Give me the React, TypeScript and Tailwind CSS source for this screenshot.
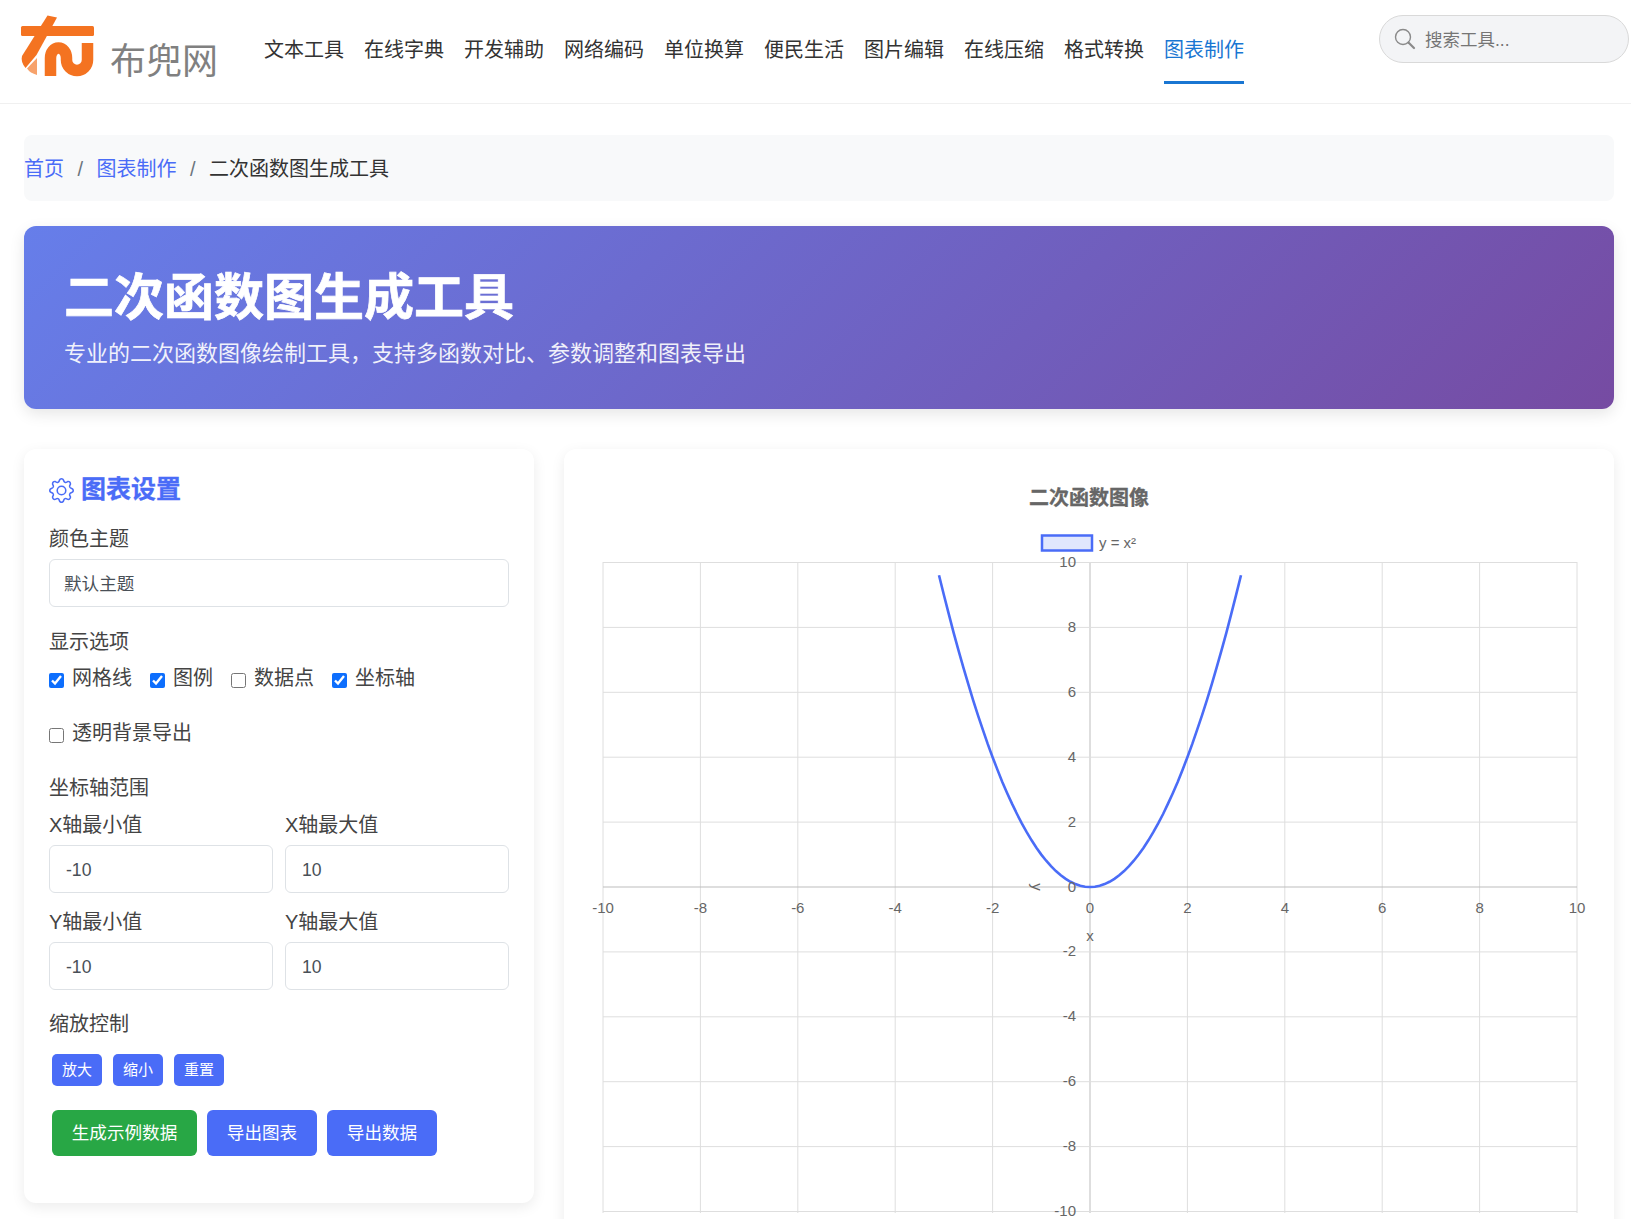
import { BsGear } from "react-icons/bs";

const navItems = ["文本工具", "在线字典", "开发辅助", "网络编码", "单位换算", "便民生活", "图片编辑", "在线压缩", "格式转换", "图表制作"];
const xTicks = [-10, -8, -6, -4, -2, 0, 2, 4, 6, 8, 10];

const X0 = 1090;
const Y0 = 887;
const XU = 48.7;
const YU = 32.45;

function curve() {
  const pts: string[] = [];
  for (let x = -3.1; x <= 3.101; x += 0.1) {
    pts.push(`${(X0 + x * XU).toFixed(1)},${(Y0 - x * x * YU).toFixed(1)}`);
  }
  return pts.join(" ");
}

function Label({ children, className }: { children: React.ReactNode; className: string }) {
  return <div className={`h-[30px] pt-px text-[20px] leading-[30px] text-[#444] ${className}`}>{children}</div>;
}

function Check({ label, checked }: { label: string; checked?: boolean }) {
  return (
    <label className="flex items-center gap-2 text-[20px] leading-[30px] text-[#444]">
      <input type="checkbox" defaultChecked={checked} className="m-0 mt-[5px] size-[15px] accent-[#0d6efd]" />
      <span>{label}</span>
    </label>
  );
}

function NumField({ label, value }: { label: string; value: string }) {
  return (
    <div className="flex-1">
      <div className="h-[30px] pt-px text-[20px] leading-[30px] text-[#444]">{label}</div>
      <input
        readOnly
        value={value}
        className="mt-[6px] block h-[48px] w-full rounded-[6px] border border-[#dee2e6] bg-white pl-4 pt-[2px] text-[17.6px] text-[#495057] outline-none"
      />
    </div>
  );
}

function Logo() {
  return (
    <div className="flex items-end">
      <svg width="74" height="62" viewBox="20 15 74 62" className="block">
        <rect x="21" y="26" width="73" height="10" rx="1.5" fill="#f47321" />
        <path d="M47.5 15.5 L57 17.5 L36.5 55 L25.5 68 Q20.5 62 22 56 Z" fill="#f47321" />
        <path d="M37 58 V75 Q30 73 27 68.5 Z" fill="#f7a26b" />
        <path
          d="M50.5 76 V58 A8 10 0 0 1 66.5 58 V60 A10.5 10.5 0 0 0 87.5 60 V43"
          fill="none"
          stroke="#f47321"
          strokeWidth="11.5"
        />
      </svg>
      <span className="mb-[-6px] ml-4 text-[36px] leading-[42px] text-[#808080]">布兜网</span>
    </div>
  );
}

export default function App() {
  return (
    <div className="h-screen overflow-hidden bg-white font-['Liberation_Sans','Noto_Sans_CJK_SC',sans-serif]">
      <header className="flex h-[104px] items-start border-b border-[#f0f0f0] pl-5">
        <div className="mt-[15px]">
          <Logo />
        </div>
        <nav className="ml-[46px] flex gap-5">
          {navItems.map((item, i) => (
            <a
              key={item}
              className={`h-[84px] border-b-[3px] pt-[35px] text-[20px] leading-[30px] ${
                i === navItems.length - 1 ? "border-[#1976d2] text-[#1976d2]" : "border-transparent text-[#333]"
              }`}
            >
              {item}
            </a>
          ))}
        </nav>
        <div className="ml-auto mr-[2px] mt-[15px] flex h-[48px] w-[250px] items-center rounded-full border border-[#d9d9d9] bg-[#f3f4f6] pl-[14px]">
          <svg width="22" height="22" viewBox="0 0 22 22" fill="none" stroke="#8a8a8a" className="shrink-0">
            <circle cx="9" cy="9" r="7.5" strokeWidth="1.4" />
            <path d="M14.5 14.5 L20 20" strokeWidth="2.2" strokeLinecap="round" />
          </svg>
          <span className="ml-[9px] pt-[2px] text-[17.5px] text-[#757575]">搜索工具...</span>
        </div>
      </header>

      <main className="pl-6 pr-[17px]">
        <div className="mt-[31px] flex h-[66px] items-center rounded-lg bg-[#f8f9fa] pt-px text-[20px]">
          <a className="text-[#4a6cf7]">首页</a>
          <span className="w-[32.5px] text-center text-[#6c757d]">/</span>
          <a className="text-[#4a6cf7]">图表制作</a>
          <span className="w-[32.5px] text-center text-[#6c757d]">/</span>
          <span className="text-[#333]">二次函数图生成工具</span>
        </div>

        <section className="mt-[25px] h-[183px] rounded-xl bg-[linear-gradient(135deg,#667eea,#764ba2)] pl-10 pt-10 text-white shadow-[0_5px_15px_rgba(0,0,0,0.1)]">
          <h1 className="mt-[2px] text-[50px] font-bold leading-[60px] [-webkit-text-stroke:0.7px_white]">二次函数图生成工具</h1>
          <p className="mt-[9px] text-[22px] leading-[33px] opacity-90">专业的二次函数图像绘制工具，支持多函数对比、参数调整和图表导出</p>
        </section>

        <div className="mt-10 flex items-start gap-[30px]">
          <aside className="h-[754px] w-[510px] shrink-0 rounded-xl bg-white px-[25px] pt-6 shadow-[0_4px_14px_rgba(0,0,0,0.08)]">
            <h2 className="flex h-[34px] items-center gap-[7px] text-[25px] font-bold text-[#4a6cf7] [-webkit-text-stroke:0.3px_#4a6cf7]">
              <BsGear size={25} className="[-webkit-text-stroke:0]" />
              图表设置
            </h2>
            <Label className="mt-4">颜色主题</Label>
            <select className="mt-[6px] block h-[48px] w-full appearance-none rounded-[6px] border border-[#dee2e6] bg-white pl-[14px] pt-[2px] text-[17.6px] text-[#495057] outline-none">
              <option>默认主题</option>
            </select>
            <Label className="mt-[19px]">显示选项</Label>
            <div className="mt-[7px] flex gap-[18px]">
              <Check label="网格线" checked />
              <Check label="图例" checked />
              <Check label="数据点" />
              <Check label="坐标轴" checked />
            </div>
            <div className="mt-[25px] flex">
              <Check label="透明背景导出" />
            </div>
            <Label className="mt-6">坐标轴范围</Label>
            <div className="mt-[7px] flex gap-3">
              <NumField label="X轴最小值" value="-10" />
              <NumField label="X轴最大值" value="10" />
            </div>
            <div className="mt-[13px] flex gap-3">
              <NumField label="Y轴最小值" value="-10" />
              <NumField label="Y轴最大值" value="10" />
            </div>
            <Label className="mt-[18px]">缩放控制</Label>
            <div className="ml-[3px] mt-4 flex gap-[11px]">
              {["放大", "缩小", "重置"].map((t) => (
                <button key={t} className="h-[32px] w-[50px] rounded-[5px] bg-[#4a6cf7] text-[15px] text-white">
                  {t}
                </button>
              ))}
            </div>
            <div className="ml-[3px] mt-6 flex gap-[10px]">
              <button className="h-[46px] w-[145px] rounded-[6px] bg-[#28a745] text-[17.6px] text-white">生成示例数据</button>
              <button className="h-[46px] w-[110px] rounded-[6px] bg-[#4a6cf7] text-[17.6px] text-white">导出图表</button>
              <button className="h-[46px] w-[110px] rounded-[6px] bg-[#4a6cf7] text-[17.6px] text-white">导出数据</button>
            </div>
          </aside>

          <section className="h-[820px] flex-1 rounded-xl bg-white shadow-[0_4px_14px_rgba(0,0,0,0.08)]">
            <svg viewBox="564 449 1050 820" className="block h-[820px] w-full">
              <text x={X0 - 1} y={498} textAnchor="middle" dominantBaseline="central" fontSize="20" fontWeight="700" fill="#666" stroke="#666" strokeWidth="0.3">
                二次函数图像
              </text>
              <rect x="1042" y="535.5" width="50" height="15" fill="#e1e7fd" stroke="#4a6cf7" strokeWidth="2.5" />
              <text x="1099" y="542" dominantBaseline="central" fontSize="15" fill="#666">
                y = x²
              </text>

              {xTicks.map((t) => (
                <line
                  key={`v${t}`}
                  x1={X0 + t * XU}
                  x2={X0 + t * XU}
                  y1={562}
                  y2={1213}
                  stroke={t === 0 ? "#bdbdbd" : "#dedede"}
                  strokeWidth="1"
                />
              ))}
              {xTicks.map((t) => (
                <line
                  key={`h${t}`}
                  x1={X0 - 10 * XU}
                  x2={X0 + 10 * XU}
                  y1={Y0 - t * YU}
                  y2={Y0 - t * YU}
                  stroke={t === 0 ? "#bdbdbd" : "#dedede"}
                  strokeWidth="1"
                />
              ))}

              <polyline points={curve()} fill="none" stroke="#4a6cf7" strokeWidth="2.6" />

              {xTicks.map((t) => (
                <text key={`xl${t}`} x={X0 + t * XU} y={907} textAnchor="middle" dominantBaseline="central" fontSize="15" fill="#666">
                  {t}
                </text>
              ))}
              {xTicks.map((t) => (
                <text key={`yl${t}`} x={1076} y={Y0 - t * YU - 1} textAnchor="end" dominantBaseline="central" fontSize="15" fill="#666">
                  {t}
                </text>
              ))}
              <text x={X0} y={935} textAnchor="middle" dominantBaseline="central" fontSize="15" fill="#666">
                x
              </text>
              <text x={1037} y={887} textAnchor="middle" dominantBaseline="central" fontSize="15" fill="#666" transform="rotate(90 1037 887)">
                y
              </text>
            </svg>
          </section>
        </div>
      </main>
    </div>
  );
}
